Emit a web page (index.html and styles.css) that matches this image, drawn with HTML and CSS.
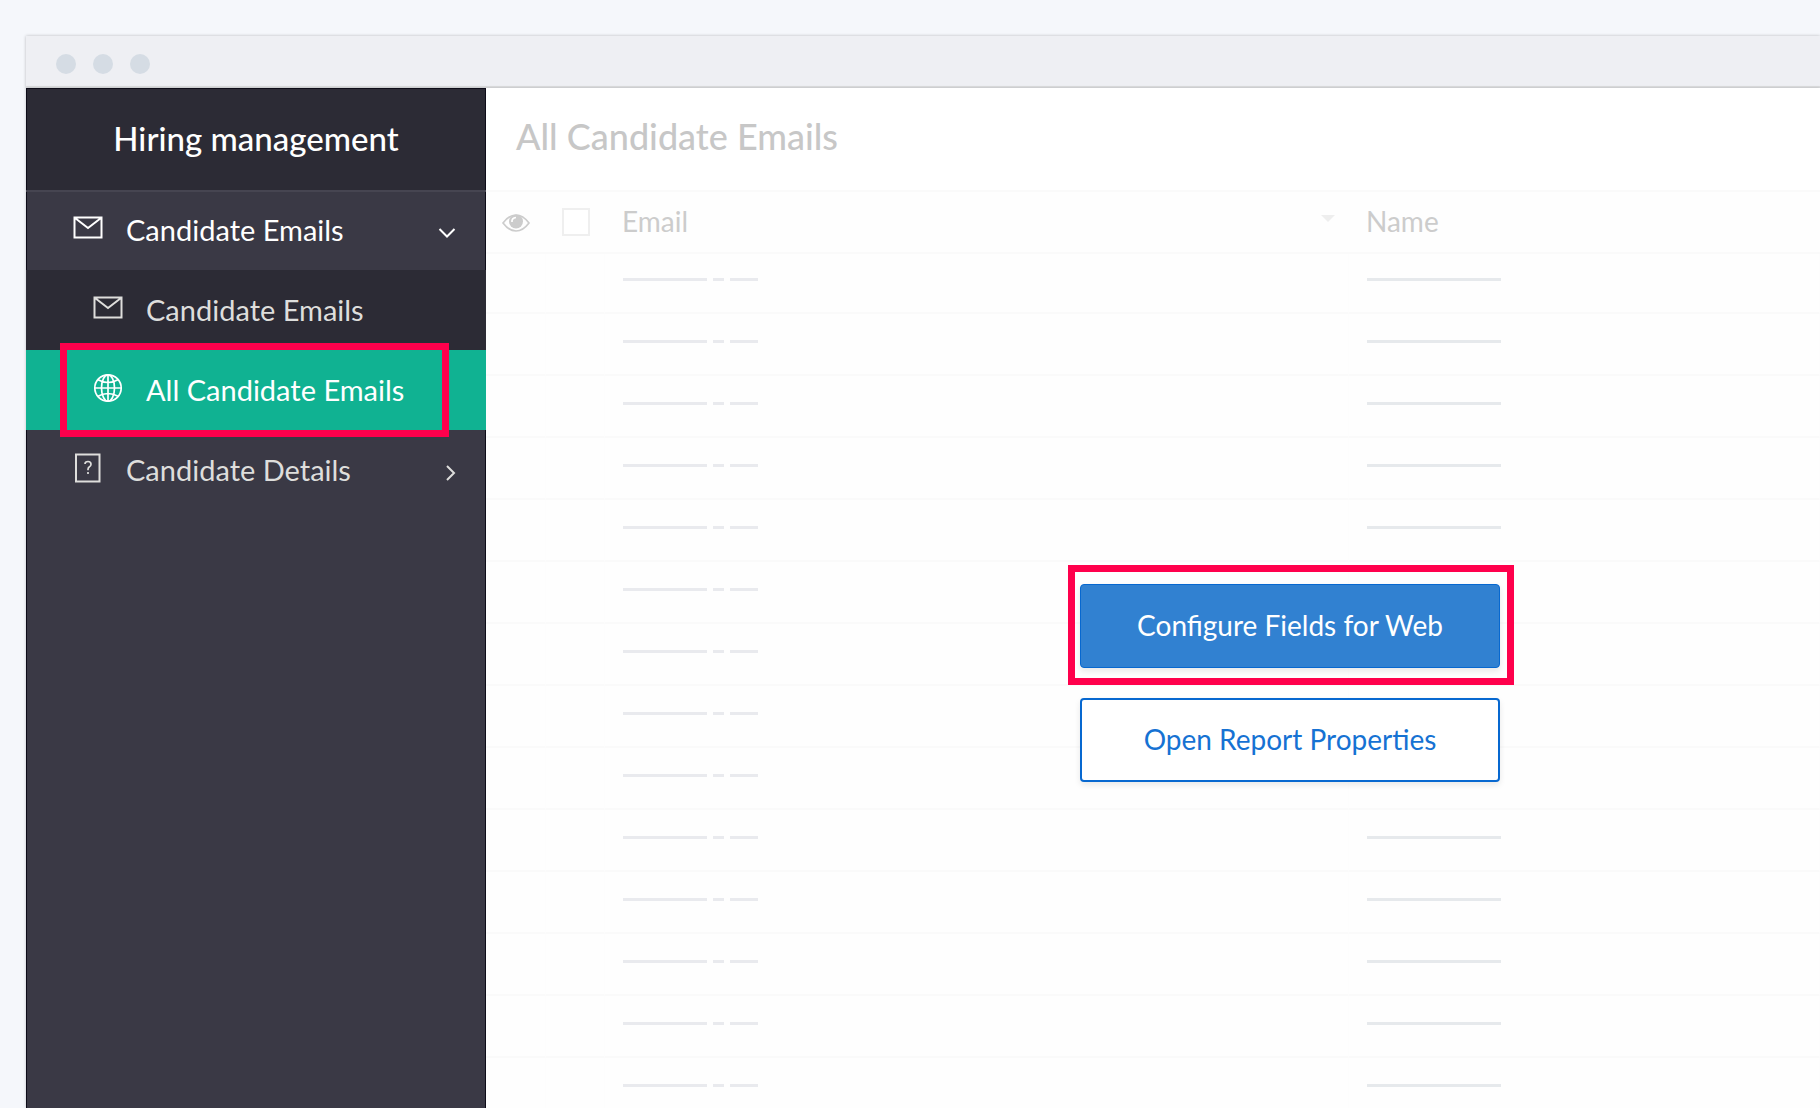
FILE: index.html
```html
<!DOCTYPE html>
<html lang="en">
<head>
<meta charset="utf-8">
<title>Hiring management</title>
<link rel="stylesheet" href="styles.css">
</head>
<body>
<svg width="0" height="0" class="sprite" aria-hidden="true">
  <symbol id="mail" viewBox="0 0 30 24"><path d="M1.5 1.5h27v20h-27zM2 2l13 10L28 2" fill="none" stroke="currentColor" stroke-width="2"/></symbol>
  <symbol id="globe" viewBox="0 0 30 30"><g fill="none" stroke="currentColor" stroke-width="1.7"><circle cx="15" cy="15" r="13.2"/><ellipse cx="15" cy="15" rx="6.5" ry="13.2"/><path d="M15 1.8v26.4M1.8 15h26.4M4.5 6.5Q15 12.5 25.5 6.5M4.5 23.5Q15 17.500 25.500 23.500"/></g></symbol>
  <symbol id="help" viewBox="0 0 30 30"><g fill="none" stroke="currentColor"><path d="M3 1.500h23.500v27H3z" stroke-width="2"/><path d="M12 11q0-2.500 3-2.500t3 2.700q0 1.800-1.800 2.800-1.200.8-1.200 2.500v.8M15 19v2" stroke-width="1.700"/></g></symbol>
</svg>
<div class="window">
  <header class="titlebar"><span class="dot"></span><span class="dot"></span><span class="dot"></span></header>
  <div class="body">
    <aside class="sidebar">
      <h2 class="app-name">Hiring management</h2>
      <nav class="nav">
        <a href="#" class="item open"><svg class="icon"><use href="#mail"/></svg>Candidate Emails<svg class="chevron" viewBox="0 0 18 18"><path d="M1.500 5l7.500 7.500L16.500 5"/></svg></a>
        <a href="#" class="item sub"><svg class="icon"><use href="#mail"/></svg>Candidate Emails</a>
        <a href="#" class="item sub active"><svg class="icon"><use href="#globe"/></svg>All Candidate Emails</a>
        <a href="#" class="item"><svg class="icon"><use href="#help"/></svg>Candidate Details<svg class="chevron" viewBox="0 0 18 18"><path d="M9 2l7 7-7 7"/></svg></a>
      </nav>
    </aside>
    <main class="main">
      <h1 class="title">All Candidate Emails</h1>
      <table class="report">
        <colgroup><col class="c-eye"><col class="c-check"><col class="c-email"><col></colgroup>
        <thead><tr>
          <th><svg class="eye" viewBox="0 0 28 18"><path d="M1 9Q7 1 14 1t13 8q-6 8-13 8T1 9z" fill="none" stroke="currentColor" stroke-width="1.700"/><circle cx="14" cy="7.500" r="7" fill="currentColor"/><path d="M10 8q-.5-4 4-4.500" fill="none" stroke="#fff" stroke-width="1.700"/></svg></th>
          <th><input type="checkbox" class="check" aria-label="Select all"></th>
          <th><div class="head">Email<span class="caret"></span></div></th>
          <th><div class="head">Name</div></th>
        </tr></thead>
        <tbody>
          <tr><td></td><td></td><td><div class="dashes"><i></i><i></i><i></i></div></td><td><div class="line"></div></td></tr>
          <tr><td></td><td></td><td><div class="dashes"><i></i><i></i><i></i></div></td><td><div class="line"></div></td></tr>
          <tr><td></td><td></td><td><div class="dashes"><i></i><i></i><i></i></div></td><td><div class="line"></div></td></tr>
          <tr><td></td><td></td><td><div class="dashes"><i></i><i></i><i></i></div></td><td><div class="line"></div></td></tr>
          <tr><td></td><td></td><td><div class="dashes"><i></i><i></i><i></i></div></td><td><div class="line"></div></td></tr>
          <tr><td></td><td></td><td><div class="dashes"><i></i><i></i><i></i></div></td><td></td></tr>
          <tr><td></td><td></td><td><div class="dashes"><i></i><i></i><i></i></div></td><td></td></tr>
          <tr><td></td><td></td><td><div class="dashes"><i></i><i></i><i></i></div></td><td></td></tr>
          <tr><td></td><td></td><td><div class="dashes"><i></i><i></i><i></i></div></td><td></td></tr>
          <tr><td></td><td></td><td><div class="dashes"><i></i><i></i><i></i></div></td><td><div class="line"></div></td></tr>
          <tr><td></td><td></td><td><div class="dashes"><i></i><i></i><i></i></div></td><td><div class="line"></div></td></tr>
          <tr><td></td><td></td><td><div class="dashes"><i></i><i></i><i></i></div></td><td><div class="line"></div></td></tr>
          <tr><td></td><td></td><td><div class="dashes"><i></i><i></i><i></i></div></td><td><div class="line"></div></td></tr>
          <tr><td></td><td></td><td><div class="dashes"><i></i><i></i><i></i></div></td><td><div class="line"></div></td></tr>
        </tbody>
      </table>
      <div class="actions">
        <button type="button" class="btn primary">Configure Fields for Web</button>
        <button type="button" class="btn">Open Report Properties</button>
      </div>
    </main>
  </div>
</div>
</body>
</html>
```
FILE: styles.css
```css
* { box-sizing: border-box; }
body {
  margin: 0;
  height: 100vh;
  overflow: hidden;
  background: #f5f7fb;
  font-family: Lato, "Liberation Sans", sans-serif;
  font-size: 28px;
}
.sprite { position: absolute; }
.window {
  display: flex;
  flex-direction: column;
  height: 100vh;
  padding: 36px 0 0 26px;
}
.titlebar {
  display: flex;
  flex: none;
  align-items: center;
  gap: 17px;
  height: 52px;
  padding: 6px 30px 0;
  background: #eeeff3;
  border-bottom: 2px solid #dedfe1;
  box-shadow: 0 0 3px rgba(0, 0, 0, .25);
}
.dot { width: 20px; height: 20px; border-radius: 50%; background: #d5dce4; }
.body { display: flex; flex: 1; min-height: 0; box-shadow: 0 0 3px rgba(0, 0, 0, .2); }
.sidebar {
  flex: none;
  width: 460px;
  background: #3a3945;
  border: 1px solid #0d0c18;
  border-bottom: 0;
  font-size: 29px;
}
.app-name {
  margin: 0;
  height: 101px;
  line-height: 98px;
  background: #2c2b35;
  color: #fff;
  font-size: 33px;
  font-weight: 500;
  text-align: center;
}
.nav { margin: 0 -1px; }
.item {
  position: relative;
  display: flex;
  align-items: center;
  height: 80px;
  padding: 0 30px 2px 47px;
  color: #dededc;
  text-decoration: none;
}
.item.open { color: #fff; box-shadow: inset 0 2px #464551; }
.item.sub { padding-left: 67px; background: #2c2b35; }
.item.active { background: #10b292; color: #fff; }
.active::after {
  content: "";
  position: absolute;
  inset: -7px 37px -7px 34px;
  border: 7px solid #ff004c;
  z-index: 1;
}
.icon { width: 30px; height: 30px; margin-right: 23px; margin-bottom: 2px; }
.chevron {
  width: 18px;
  height: 18px;
  margin-left: auto;
  margin-top: 8px;
  fill: none;
  stroke: currentColor;
  stroke-width: 2;
}
.main { position: relative; flex: 1; min-width: 0; overflow: hidden; background: #fff; }
.title {
  margin: 0;
  height: 102px;
  padding-left: 30px;
  line-height: 96px;
  font-size: 36px;
  font-weight: 500;
  color: #c7c7c7;
}
.report { width: 100%; table-layout: fixed; border-collapse: separate; border-spacing: 0; }
.c-eye { width: 60px; }
.c-check { width: 59px; }
.c-email { width: 744px; }
th { height: 64px; padding: 0; border: solid #fafafa; border-width: 2px 0; background: #fefefe; font-weight: 400; color: #ccc; }
td { height: 62px; padding: 0 0 6px; border-right: 1px solid #fdfdfd; border-bottom: 2px solid #fafafa; background: #fefefe; }
tbody tr:first-child td { height: 60px; padding-bottom: 8px; }
.eye { display: block; width: 28px; height: 18px; margin: 2px 0 0 16px; }
.check { appearance: none; display: block; width: 28px; height: 28px; margin: 0 0 0 16px; border: 2px solid #efefef; background: #fff; }
.head { display: flex; justify-content: space-between; align-items: center; padding: 0 14px 2px 17px; }
.caret { width: 14px; border: 7px solid transparent; border-top-color: #eee; border-bottom: 0; margin-bottom: 6px; }
.dashes { display: flex; gap: 6px; padding-left: 18px; }
.dashes i { width: 28px; height: 3px; background: #e9eaee; }
.dashes i:first-child { width: 84px; }
.dashes i:nth-child(2) { width: 11px; }
.line { width: 134px; height: 3px; margin-left: 18px; background: #e6e9ec; }
.actions {
  position: absolute;
  top: 496px;
  left: 594px;
  display: flex;
  flex-direction: column;
  gap: 30px;
  width: 420px;
}
.btn {
  position: relative;
  height: 84px;
  padding: 0 0 2px;
  border: 2px solid #0768d0;
  border-radius: 4px;
  background: #fff;
  box-shadow: 0 3px 6px rgba(0, 0, 0, .09);
  color: #1672d3;
  font: inherit;
}
.primary { background: #3181d1; border-width: 1px; color: #fff; }
.primary::after {
  content: "";
  position: absolute;
  inset: -20px -15px -18px -13px;
  border: 7px solid #ff004c;
}
```
